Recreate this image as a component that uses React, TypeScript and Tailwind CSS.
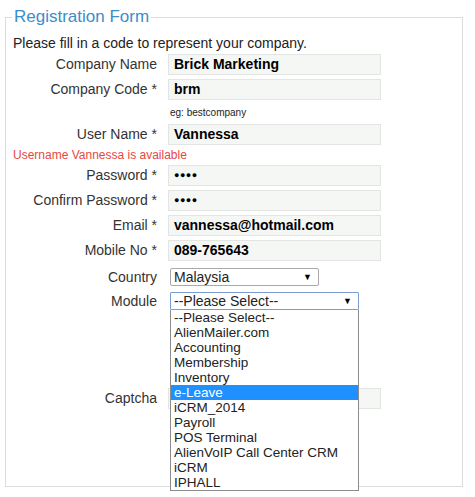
const modules = [
  "--Please Select--",
  "AlienMailer.com",
  "Accounting",
  "Membership",
  "Inventory",
  "e-Leave",
  "iCRM_2014",
  "Payroll",
  "POS Terminal",
  "AlienVoIP Call Center CRM",
  "iCRM",
  "IPHALL",
];

function Field({ label, value, masked }: { label: string; value: string; masked?: boolean }) {
  return (
    <div className="flex items-center h-[25px]">
      <div className="w-[144px] text-right text-[14px] text-[#333]">{label}</div>
      <div className="ml-[11px] w-[213px] h-[21px] bg-[#f5f7f5] border border-[#e2e5e2] flex items-center pl-[5px] text-[14px] font-bold text-black">
        {masked ? <span className="text-[9px] tracking-[0.5px]">●●●●</span> : value}
      </div>
    </div>
  );
}

function Arrow() {
  return <span className="text-[9px] text-black leading-none">▼</span>;
}

export default function App() {
  return (
    <div className="w-[475px] h-[497px] bg-white pt-[6px] pl-[5px] font-['Liberation_Sans',Arial,sans-serif]">
      <fieldset className="w-[458px] h-[481px] border border-[#dcdcdc] relative">
        <legend className="ml-[6px] px-[2px] text-[17px] leading-[22px] text-[#3d8ccc]">Registration Form</legend>
        <div className="pl-[7px] pt-[6px]">
          <p className="text-[14px] leading-[18px] text-[#222]">Please fill in a code to represent your company.</p>
          <div className="flex flex-col">
            <Field label="Company Name" value="Brick Marketing" />
            <Field label="Company Code *" value="brm" />
            <div className="h-[20px] pl-[157px] flex items-center text-[10px] text-[#222]">eg: bestcompany</div>
            <Field label="User Name *" value="Vannessa" />
            <div className="h-[16px] flex items-center text-[12px] text-[#e8473f]">Username Vannessa is available</div>
            <Field label="Password *" value="" masked />
            <Field label="Confirm Password *" value="" masked />
            <Field label="Email *" value="vannessa@hotmail.com" />
            <Field label="Mobile No *" value="089-765643" />
            <div className="flex items-center h-[26px] mt-[1px]">
              <div className="w-[144px] text-right text-[14px] text-[#333]">Country</div>
              <div className="ml-[13px] w-[149px] h-[18px] border border-[#a9a9a9] rounded-[2px] flex items-center justify-between pl-[3px] pr-[6px] text-[14px] text-[#222]">
                Malaysia
                <Arrow />
              </div>
            </div>
            <div className="flex items-center h-[22px] relative">
              <div className="w-[144px] text-right text-[14px] text-[#333]">Module</div>
              <div className="ml-[13px] w-[189px] h-[18px] border border-[#7a9cd3] rounded-[1px] flex items-center justify-between pl-[3px] pr-[6px] text-[14px] text-[#222]">
                --Please Select--
                <Arrow />
              </div>
              <div className="absolute left-[157px] top-[20px] w-[189px] h-[181px] bg-white border border-[#8c8c8c] border-t-0 z-10 flex flex-col">
                {modules.map((m) => (
                  <div
                    key={m}
                    className={
                      "h-[15px] leading-[15px] pl-[3px] text-[13.5px] " +
                      (m === "e-Leave" ? "bg-[#1e90ff] text-white" : "text-[#222]")
                    }
                  >
                    {m}
                  </div>
                ))}
              </div>
            </div>
            <div className="h-[74px]" />
            <div className="flex items-center h-[24px]">
              <div className="w-[144px] text-right text-[14px] text-[#333]">Captcha</div>
              <div className="ml-[11px] w-[213px] h-[21px] bg-[#f5f7f5] border border-[#e2e5e2]" />
            </div>
          </div>
        </div>
      </fieldset>
    </div>
  );
}
